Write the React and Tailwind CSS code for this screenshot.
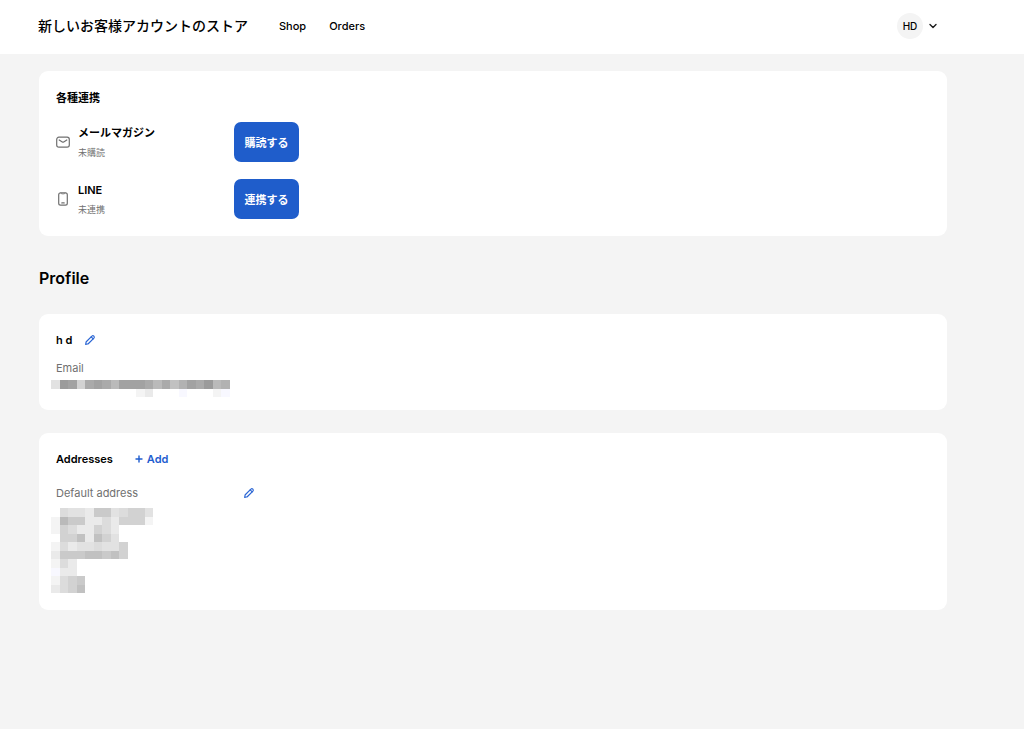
import React from 'react';

// 伏せ字モザイク（'.' は塗りなし）
const SHADES = {
  a: '#f8f8ff',
  b: '#f4f4f4',
  c: '#eaeaea',
  d: '#e2e2e2',
  e: '#dcdcdc',
  f: '#d2d2d2',
  g: '#cacaca',
  h: '#c1c1c1',
  i: '#bababa',
  j: '#b2b2b2',
  k: '#aaaaaa',
  l: '#a2a2a2',
  m: '#9b9b9b',
};

const EMAIL_MOSAIC = ['dmlfklkilllkikhjlkmij', '..........bc...a...ba'];

const ADDRESS_MOSAIC = [
  '.eddcggdeffd',
  'biggccecfffb',
  'bfeccfec....',
  '.ffhchfd....',
  'becddeddf...',
  'cggghhghf...',
  'bec.........',
  'acc.........',
  'befg........',
  'cefh........',
];

const Mosaic = ({ rows, label, className }) => (
  <svg
    className={className}
    viewBox={`0 0 ${rows[0].length} ${rows.length}`}
    preserveAspectRatio="none"
    shapeRendering="crispEdges"
    role="img"
    aria-label={label}
  >
    {rows.map((row, y) =>
      row.split('').map((cell, x) =>
        cell === '.' ? null : (
          <rect key={`${x}-${y}`} x={x} y={y} width="1" height="1" fill={SHADES[cell]} />
        )
      )
    )}
  </svg>
);

const ChevronIcon = () => (
  <svg className="w-2 h-2" viewBox="0 0 8 8" fill="none" stroke="#1a1a1a" strokeWidth="1.4" strokeLinecap="round" strokeLinejoin="round">
    <path d="M1 2.6 4 5.4 7 2.6" />
  </svg>
);

const MailIcon = () => (
  <svg className="w-3.5 h-3.5" viewBox="0 0 14 14" fill="none" stroke="#707070" strokeWidth="1.2" strokeLinecap="round" strokeLinejoin="round">
    <rect x="0.7" y="2.2" width="12.6" height="10" rx="2.2" />
    <path d="M3.2 5 6.3 7Q7 7.4 7.7 7L10.8 5" />
  </svg>
);

const MobileIcon = () => (
  <svg className="w-3.5 h-3.5" viewBox="0 0 14 14" fill="none" stroke="#707070" strokeWidth="1.2" strokeLinecap="round" strokeLinejoin="round">
    <rect x="2.7" y="0.8" width="8.6" height="12.4" rx="1.9" />
    <path d="M5 1Q5.2 1.9 5.9 1.9H8.1Q8.8 1.9 9 1" strokeWidth="0.7" />
    <path d="M5.8 10.9H8.2" />
  </svg>
);

const PencilIcon = () => (
  <svg className="w-3 h-3" viewBox="0 0 12 12" fill="none" stroke="#2b66d4" strokeWidth="1.2" strokeLinecap="round" strokeLinejoin="round">
    <path d="M1.7 10.3 2 8.5Q2.1 7.9 2.5 7.5L7.9 2.1Q8.9 1.3 9.9 2.1 10.7 3.1 9.9 4.1L4.5 9.5Q4.1 9.9 3.5 10Z" />
    <path d="M7.2 2.8 9.2 4.8" />
  </svg>
);

const PlusIcon = () => (
  <svg className="w-2 h-2" viewBox="0 0 8 8" fill="none" stroke="#1f5dcf" strokeWidth="1.4" strokeLinecap="round">
    <path d="M4 1V7M1 4H7" />
  </svg>
);

const Card = ({ children, className }) => (
  <section className={`bg-white rounded-[9px] px-[17px] ${className}`}>{children}</section>
);

const LinkRow = ({ icon, title, status, action }) => (
  <div className="flex items-center h-10">
    <span className="mr-2">{icon}</span>
    <div className="w-[156px] pt-0.5">
      <h3 className="text-[11px] leading-5 font-semibold">{title}</h3>
      <p className="text-[9px] leading-5 text-[#707070]">{status}</p>
    </div>
    <button
      type="button"
      className="w-[65px] h-10 pt-0.5 rounded-[7px] bg-[#1f5dcb] text-white text-[11px] font-semibold whitespace-nowrap cursor-pointer"
    >
      {action}
    </button>
  </div>
);

const App = () => {
  return (
    <div className="min-h-screen bg-[#f4f4f4] text-black text-[11px] leading-4 font-['Inter','Noto_Sans_CJK_JP',sans-serif]">
      {/* ヘッダー */}
      <header className="bg-white flex items-center h-[54px] pb-0.5 pl-[38px] pr-[87px]">
        <a href="#home" className="text-[14px] leading-5 font-medium whitespace-nowrap">
          新しいお客様アカウントのストア
        </a>
        <nav className="flex gap-[23px] ml-[31px] font-medium">
          <a href="#shop">Shop</a>
          <a href="#orders">Orders</a>
        </nav>
        <button type="button" aria-label="アカウントメニュー" className="ml-auto flex items-center gap-1.5 cursor-pointer">
          <span className="flex items-center justify-center w-[26px] h-[26px] rounded-full bg-[#f4f4f4] text-[10px] font-medium">
            HD
          </span>
          <ChevronIcon />
        </button>
      </header>

      <main className="pl-[39px] pr-[77px] pt-[17px] pb-8">
        {/* 各種連携 */}
        <Card className="pt-[19px] pb-[17px]">
          <h2 className="font-semibold mb-4">各種連携</h2>
          <div className="flex flex-col gap-[17px]">
            <LinkRow icon={<MailIcon />} title="メールマガジン" status="未購読" action="購読する" />
            <LinkRow icon={<MobileIcon />} title="LINE" status="未連携" action="連携する" />
          </div>
        </Card>

        <h1 className="text-[16px] leading-6 font-semibold mt-[30px] mb-6">Profile</h1>

        {/* プロフィール */}
        <Card className="pt-[18px] pb-[13px]">
          <div className="flex items-center gap-3">
            <h2 className="font-semibold">h d</h2>
            <button type="button" aria-label="Edit profile" className="cursor-pointer">
              <PencilIcon />
            </button>
          </div>
          <p className="mt-3 text-[#707070]">Email</p>
          <Mosaic rows={EMAIL_MOSAIC} label="Email hidden" className="w-[179px] h-[17px] mt-1 -ml-[5px]" />
        </Card>

        {/* 住所 */}
        <Card className="mt-[23px] pt-[18px] pb-[17px]">
          <div className="flex items-center gap-[22px]">
            <h2 className="font-semibold">Addresses</h2>
            <button type="button" className="flex items-center gap-1 font-semibold text-[#1f5dcf] cursor-pointer">
              <PlusIcon />
              Add
            </button>
          </div>
          <div className="flex items-center justify-between w-[199px] mt-[18px]">
            <p className="text-[#707070]">Default address</p>
            <button type="button" aria-label="Edit default address" className="cursor-pointer">
              <PencilIcon />
            </button>
          </div>
          <Mosaic rows={ADDRESS_MOSAIC} label="Default address hidden" className="w-[102px] h-[85px] mt-[7px] -ml-[5px]" />
        </Card>
      </main>
    </div>
  );
};

export default App;
